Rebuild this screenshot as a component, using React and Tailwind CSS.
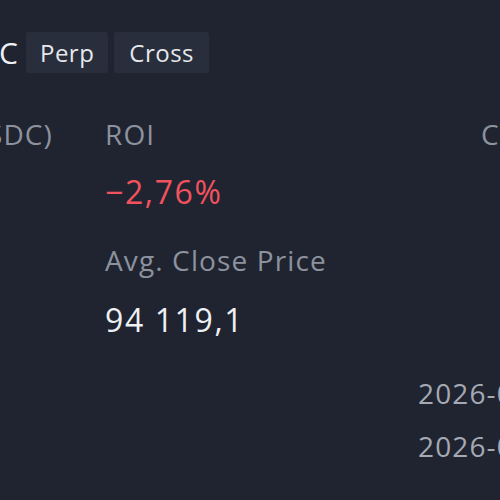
export default function App() {
  return (
    <div className="w-[500px] h-[500px] overflow-hidden bg-[#1f2430] relative" style={{ fontFamily: "'Open Sans', Lato, sans-serif" }}>
      <div className="flex items-center gap-[6px] mt-[32px] -ml-[180px]">
        <div className="shrink-0 text-[30px] leading-[41px] text-[#eef0f3] font-medium w-[198px] text-right">BTCUSDC</div>
        <div className="shrink-0 ml-[2px] h-[41px] px-[14px] flex items-center bg-[#282e3b] rounded-[3px] text-[24px] tracking-[0.02em] text-[#e6e8ec]">Perp</div>
        <div className="shrink-0 h-[41px] px-[15px] flex items-center bg-[#282e3b] rounded-[3px] text-[24px] tracking-[0.02em] text-[#e6e8ec]">Cross</div>
      </div>
      <div className="flex mt-[46px] -ml-[200px]">
        <div className="shrink-0 w-[253px] flex justify-end">
          <div className="shrink-0 text-[28px] leading-[30px] tracking-[0.04em] text-[#8c929e] whitespace-nowrap">Closed PnL (USDC)</div>
        </div>
        <div className="shrink-0 ml-[52px] w-[376px] flex flex-col">
          <div className="text-[28px] leading-[30px] tracking-[0.04em] text-[#8c929e]">ROI</div>
          <div className="mt-[25px] text-[32px] leading-[36px] tracking-[0.05em] text-[#f2525d]">−2,76%</div>
          <div className="mt-[35px] text-[28px] leading-[30px] tracking-[0.04em] text-[#8c929e]">Avg. Close Price</div>
          <div className="mt-[27px] text-[32px] leading-[36px] tracking-[0.05em] text-[#eef0f3]">94 119,1</div>
        </div>
        <div className="shrink-0 text-[28px] leading-[30px] tracking-[0.04em] text-[#8c929e] whitespace-nowrap">Close Time</div>
      </div>
      <div className="flex flex-col ml-[418px] mt-[40px] gap-[23px]">
        <div className="text-[28px] leading-[30px] tracking-[0.04em] text-[#a4a9b3] whitespace-nowrap">2026-01-12</div>
        <div className="text-[28px] leading-[30px] tracking-[0.04em] text-[#a4a9b3] whitespace-nowrap">2026-01-12</div>
      </div>
    </div>
  );
}
